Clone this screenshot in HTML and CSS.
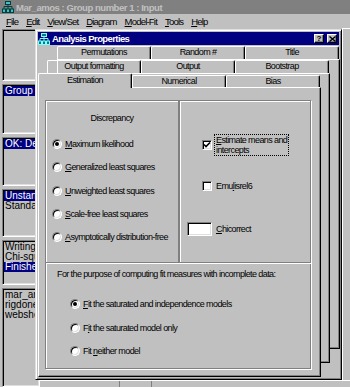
FILE: index.html
```html
<!DOCTYPE html>
<html>
<head>
<meta charset="utf-8">
<title>Mar_amos : Group number 1 : Input</title>
<link rel="stylesheet" href="styles.css">
</head>
<body>
<div class="app">
  <div class="caption">
    <svg class="amos-icon" width="12" height="12" viewBox="0 0 12 12">
      <path d="M6 3.5v2M2 5.5h8M2 5.5v2.5M6 5.5v2.5M10 5.5v2.5" stroke="#004040" fill="none"/>
      <rect x="3.5" y="0.5" width="5" height="3" fill="#40c0c0" stroke="#004040"/>
      <rect x="0.5" y="8" width="3" height="3.5" fill="#40c0c0" stroke="#004040"/>
      <rect x="4.5" y="8" width="3" height="3.5" fill="#40c0c0" stroke="#004040"/>
      <rect x="8.5" y="8" width="3" height="3.5" fill="#40c0c0" stroke="#004040"/>
    </svg>
    <span>Mar_amos : Group number 1 : Input</span>
  </div>

  <div class="menubar">
    <span><u>F</u>ile</span>
    <span><u>E</u>dit</span>
    <span><u>V</u>iew/Set</span>
    <span><u>D</u>iagram</span>
    <span><u>M</u>odel-Fit</span>
    <span><u>T</u>ools</span>
    <span><u>H</u>elp</span>
  </div>

  <div class="client">
    <div class="sidebar">
      <div class="listbox lb1"></div>
      <div class="listbox lb2"><div class="item sel">Group number 1</div></div>
      <div class="listbox lb3"><div class="item sel">OK: Default model</div></div>
      <div class="listbox lb4">
        <div class="item sel">Unstandardized estimates</div>
        <div class="item">Standardized estimates</div>
      </div>
      <div class="listbox lb5">
        <div class="item">Writing output</div>
        <div class="item">Chi-square = 0.0</div>
        <div class="item sel">Finished</div>
      </div>
      <div class="listbox lb6">
        <div class="item">mar_amos</div>
        <div class="item">rigdone</div>
        <div class="item">webshot</div>
      </div>
    </div>
    <div class="workspace">
      <div class="drawing"></div>
      <div class="statusbar">
        <span class="sb-cell sb-a"></span>
        <span class="sb-cell sb-b"></span>
        <span class="sb-cell sb-c"></span>
      </div>
    </div>
  </div>

  <!-- Analysis Properties dialog -->
  <div class="dialog">
    <div class="dlg-title">
      <svg class="amos-icon" width="12" height="12" viewBox="0 0 12 12">
        <path d="M6 3.5v2M2 5.5h8M2 5.5v2.5M6 5.5v2.5M10 5.5v2.5" stroke="#80ffff" fill="none"/>
        <rect x="3.5" y="0.5" width="5" height="3" fill="#008080" stroke="#80ffff"/>
        <rect x="0.5" y="8" width="3" height="3.5" fill="#008080" stroke="#80ffff"/>
        <rect x="4.5" y="8" width="3" height="3.5" fill="#008080" stroke="#80ffff"/>
        <rect x="8.5" y="8" width="3" height="3.5" fill="#008080" stroke="#80ffff"/>
      </svg>
      <span class="dlg-title-text">Analysis Properties</span>
      <span class="cap-btn help">?</span>
      <span class="cap-btn close">
        <svg width="7" height="6" viewBox="0 0 7 6"><path d="M0.5 0.5l6 5M6.5 0.5l-6 5" stroke="#000" stroke-width="1.4"/></svg>
      </span>
    </div>

    <div class="tabstack">
      <div class="layer layer-3">
        <div class="tabrow">
          <div class="tab">Permutations</div>
          <div class="tab">Random #</div>
          <div class="tab">Title</div>
        </div>
        <div class="page"></div>
      </div>

      <div class="layer layer-2">
        <div class="tabrow">
          <div class="tab">Output formatting</div>
          <div class="tab">Output</div>
          <div class="tab">Bootstrap</div>
        </div>
        <div class="page"></div>
      </div>

      <div class="layer layer-1">
        <div class="tabrow">
          <div class="tab active">Estimation</div>
          <div class="tab">Numerical</div>
          <div class="tab">Bias</div>
        </div>
        <div class="page page-front">
          <div class="groups-top">
            <div class="group grp-disc">
              <div class="grp-heading">Discrepancy</div>
              <div class="radio-list">
                <div class="opt"><span class="radio on"></span><span><u>M</u>aximum likelihood</span></div>
                <div class="opt"><span class="radio"></span><span><u>G</u>eneralized least squares</span></div>
                <div class="opt"><span class="radio"></span><span><u>U</u>nweighted least squares</span></div>
                <div class="opt"><span class="radio"></span><span><u>S</u>cale-free least squares</span></div>
                <div class="opt"><span class="radio"></span><span><u>A</u>symptotically distribution-free</span></div>
              </div>
            </div>

            <div class="group grp-opts">
              <div class="opt-row row-means">
                <span class="opt-box">
                  <span class="check">
                    <svg width="8" height="8" viewBox="0 0 8 8"><path d="M1 3.5l2 2 4-4" stroke="#000" stroke-width="1.6" fill="none"/></svg>
                  </span>
                </span>
                <span class="opt-label focus"><u>E</u>stimate means and<br>intercepts</span>
              </div>
              <div class="opt-row row-emul">
                <span class="opt-box"><span class="check"></span></span>
                <span class="opt-label">Emu<u>l</u>isrel6</span>
              </div>
              <div class="opt-row row-chi">
                <span class="opt-box"><span class="edit"></span></span>
                <span class="opt-label"><u>C</u>hicorrect</span>
              </div>
            </div>
          </div>

          <div class="group grp-missing">
            <div class="grp-note">For the purpose of computing fit measures with incomplete data:</div>
            <div class="radio-list radio-list-missing">
              <div class="opt"><span class="radio on"></span><span><u>F</u>it the saturated and independence models</span></div>
              <div class="opt"><span class="radio"></span><span>F<u>i</u>t the saturated model only</span></div>
              <div class="opt"><span class="radio"></span><span>Fit <u>n</u>either model</span></div>
            </div>
          </div>
        </div>
      </div>
    </div>
  </div>
</div>
</body>
</html>
```

FILE: styles.css
```css
* {
  box-sizing: border-box;
}
body {
  margin: 0;
  background: #c0c0c0;
  color: #000;
  font-family: "Liberation Sans", Arial, sans-serif;
  font-size: 9px;
}
.app {
  position: relative;
  width: 350px;
  height: 387px;
  overflow: hidden;
  background: #c0c0c0;
  display: flex;
  flex-direction: column;
}

/* main window */
.caption {
  height: 14px;
  flex: none;
  display: flex;
  align-items: center;
  gap: 2px;
  padding-left: 2px;
  background: #808080;
  color: #c0c0c0;
  font-size: 9.5px;
  font-weight: bold;
  letter-spacing: -0.45px;
  white-space: nowrap;
}
.amos-icon {
  flex: none;
  display: block;
}
.menubar {
  height: 14px;
  flex: none;
  display: flex;
  align-items: center;
  gap: 8px;
  padding-left: 6px;
  font-size: 9.5px;
  letter-spacing: -0.8px;
  white-space: nowrap;
}
.client {
  flex: 1;
  display: flex;
  min-height: 0;
}
.sidebar {
  width: 40px;
  flex: none;
  display: flex;
  flex-direction: column;
  gap: 3px;
  padding: 1px 0 0 2px;
}
.listbox {
  border: 1px solid;
  border-color: #808080 #fff #fff #808080;
  box-shadow: inset 1px 1px 0 #000, inset -1px -1px 0 #dfdfdf;
  padding: 1px;
  overflow: hidden;
  white-space: nowrap;
  font-size: 10px;
  line-height: 10px;
}
.lb1 { height: 52px; }
.lb2 { height: 50px; }
.lb3 { height: 49px; }
.lb4 { height: 48px; }
.lb5 { height: 45px; }
.lb6 { flex: 1; }
.item {
  padding-left: 1px;
}
.item.sel {
  background: #000080;
  color: #fff;
}
.workspace {
  flex: 1;
  display: flex;
  flex-direction: column;
}
.drawing {
  flex: 1;
  margin-left: 302px;
  border-top: 1px solid #fff;
  border-left: 1px solid #fff;
}
.statusbar {
  height: 7px;
  flex: none;
  display: flex;
  border-top: 1px solid #fff;
}
.sb-cell {
  border-right: 1px solid #808080;
}
.sb-a { width: 80px; }
.sb-b { width: 32px; }
.sb-c { flex: 1; border-right: none; }

/* dialog */
.dialog {
  position: absolute;
  left: 35px;
  top: 29px;
  width: 307px;
  height: 351px;
  display: flex;
  flex-direction: column;
  padding: 2px;
  background: #c0c0c0;
  border: 1px solid;
  border-color: #dfdfdf #000 #000 #dfdfdf;
  box-shadow: inset 1px 1px 0 #fff, inset -1px -1px 0 #808080;
  letter-spacing: -0.6px;
}
.dlg-title {
  height: 13px;
  flex: none;
  display: flex;
  align-items: center;
  gap: 2px;
  background: #000080;
  color: #fff;
  font-size: 9.5px;
  font-weight: bold;
  padding-right: 2px;
}
.dlg-title-text {
  flex: 1;
}
.cap-btn {
  width: 10px;
  height: 9px;
  display: flex;
  align-items: center;
  justify-content: center;
  background: #c0c0c0;
  color: #000;
  border: 1px solid;
  border-color: #fff #000 #000 #fff;
  box-shadow: inset -1px -1px 0 #808080;
  font-size: 8px;
  line-height: 8px;
  letter-spacing: 0;
}
.cap-btn.close {
  margin-left: 1px;
}
.tabstack {
  position: relative;
  flex: 1;
}
.layer {
  position: absolute;
  width: 283px;
}
.layer-3 { left: 19px; top: 0; }
.layer-2 { left: 9px; top: 14px; }
.layer-1 { left: 0; top: 28px; }
.tabrow {
  height: 14px;
  display: flex;
  align-items: flex-start;
}
.tab {
  width: 94px;
  height: 12px;
  margin-top: 2px;
  text-align: center;
  line-height: 11px;
  white-space: nowrap;
  border-top: 1px solid #fff;
  border-left: 1px solid #fff;
  border-right: 1px solid #000;
  border-radius: 2px 2px 0 0;
  box-shadow: inset -1px 0 0 #808080;
}
.layer-3 .tab,
.layer-2 .tab {
  margin-top: 1px;
  height: 13px;
}
.tab.active {
  position: relative;
  z-index: 1;
  height: 15px;
  margin-top: 0;
  margin-bottom: -1px;
  line-height: 13px;
  background: #c0c0c0;
}
.page {
  height: 290px;
  background: #c0c0c0;
  border: 1px solid;
  border-color: #fff #000 #000 #fff;
  box-shadow: inset -1px -1px 0 #808080;
}
.page-front {
  padding: 12px 9px 0 6px;
}

/* group boxes */
.group {
  border: 1px solid #808080;
  box-shadow: inset 1px 1px 0 #fff, 1px 1px 0 #fff;
}
.groups-top {
  height: 163px;
  display: grid;
  grid-template-columns: 134px 1fr;
}
.grp-heading {
  margin-top: 11px;
  line-height: 12px;
  text-align: center;
}
.radio-list {
  display: flex;
  flex-direction: column;
  gap: 11.3px;
  margin-top: 14px;
  padding-left: 6px;
}
.opt {
  height: 12px;
  display: flex;
  align-items: center;
  gap: 3px;
  white-space: nowrap;
}
.radio {
  position: relative;
  flex: none;
  width: 10px;
  height: 10px;
  border-radius: 50%;
  background: #fff;
  border: 1px solid;
  border-color: #808080 #fff #fff #808080;
  box-shadow: inset 1px 1px 0 #000, inset -1px -1px 0 #dfdfdf;
}
.radio.on::after {
  content: "";
  position: absolute;
  left: 2px;
  top: 2px;
  width: 4px;
  height: 4px;
  border-radius: 50%;
  background: #000;
}
.grp-opts {
  display: flex;
  flex-direction: column;
  padding: 33px 0 0 7px;
}
.opt-row {
  display: flex;
  align-items: center;
  gap: 2px;
}
.row-means { height: 22px; }
.row-emul { height: 12px; margin-top: 24px; }
.row-chi { height: 14px; margin-top: 30px; }
.opt-box {
  width: 25px;
  display: flex;
  justify-content: flex-end;
}
.check {
  width: 10px;
  height: 10px;
  display: flex;
  align-items: center;
  justify-content: center;
  background: #fff;
  border: 1px solid;
  border-color: #808080 #fff #fff #808080;
  box-shadow: inset 1px 1px 0 #000, inset -1px -1px 0 #dfdfdf;
}
.check svg {
  display: block;
}
.edit {
  width: 25px;
  height: 14px;
  background: #fff;
  border: 1px solid;
  border-color: #808080 #fff #fff #808080;
  box-shadow: inset 1px 1px 0 #000, inset -1px -1px 0 #dfdfdf;
}
.opt-label {
  border: 1px solid transparent;
  padding: 0 1px;
  line-height: 10px;
  white-space: nowrap;
}
.opt-label.focus {
  border: 1px dotted #000;
}
.grp-missing {
  height: 107px;
  margin-top: -1px;
}
.grp-note {
  margin-top: 5px;
  padding-left: 11px;
  line-height: 12px;
  white-space: nowrap;
}
.radio-list-missing {
  margin-top: 18px;
  padding-left: 24px;
  gap: 11.5px;
}
```
